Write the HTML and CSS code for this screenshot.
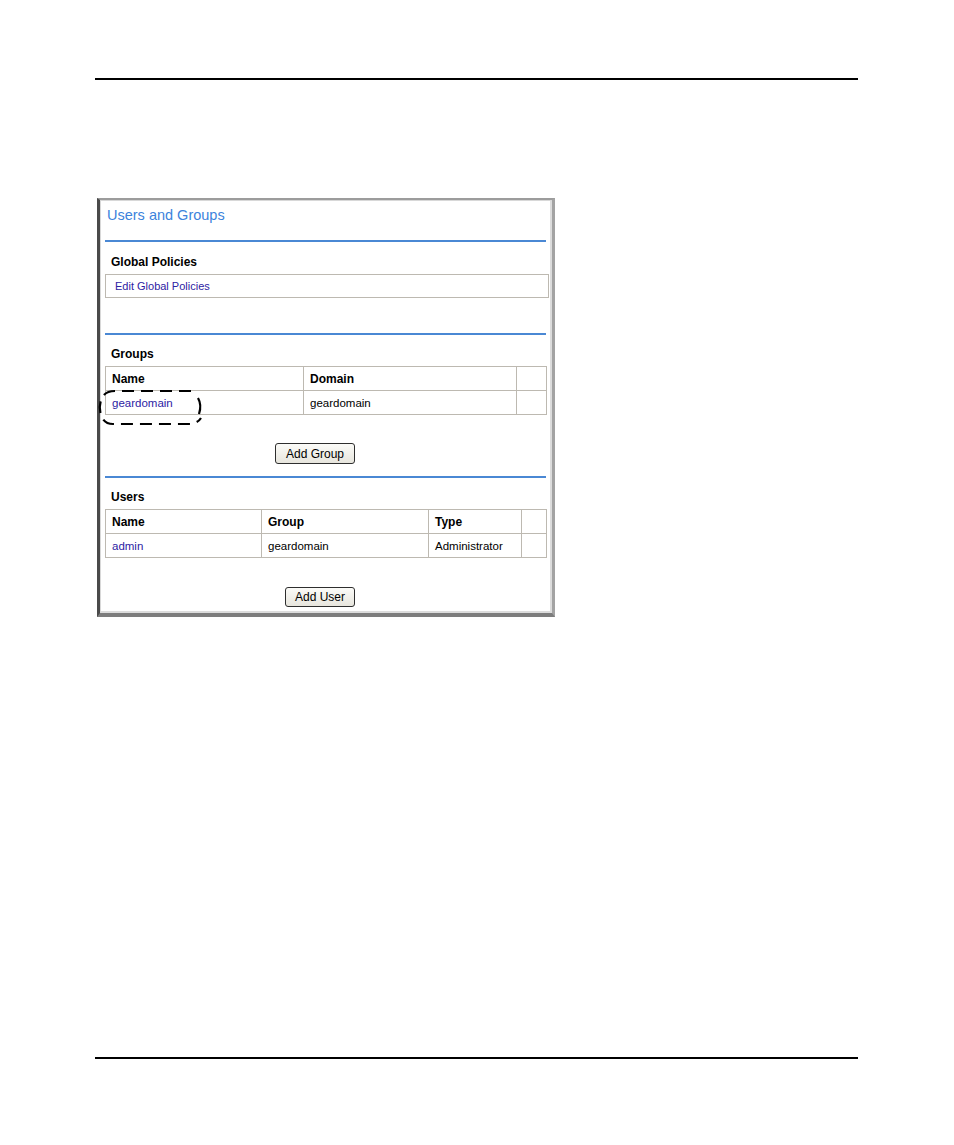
FILE: index.html
```html
<!DOCTYPE html>
<html lang="en">
  <head>
    <meta charset="UTF-8" />
    <title>Users and Groups</title>
    <link rel="stylesheet" href="styles.css">
  </head>
  <body>
    <div class="page">
      <div class="rule-top"></div>

      <div class="shot">
        <h1 class="title">Users and Groups</h1>
        <div class="blue-rule"></div>

        <h2 class="sub sub-global">Global Policies</h2>
        <div class="policy-box">
          <a href="#">Edit Global Policies</a>
        </div>

        <div class="blue-rule rule-groups"></div>
        <h2 class="sub">Groups</h2>
        <table class="grid">
          <colgroup>
            <col style="width:198px">
            <col style="width:213px">
            <col>
          </colgroup>
          <tr>
            <th>Name</th>
            <th>Domain</th>
            <th></th>
          </tr>
          <tr>
            <td><a href="#">geardomain</a></td>
            <td>geardomain</td>
            <td></td>
          </tr>
        </table>
        <div class="btn-row btn-row-group">
          <button class="btn">Add Group</button>
        </div>

        <div class="blue-rule rule-users"></div>
        <h2 class="sub">Users</h2>
        <table class="grid">
          <colgroup>
            <col style="width:156px">
            <col style="width:167px">
            <col style="width:93px">
            <col>
          </colgroup>
          <tr>
            <th>Name</th>
            <th>Group</th>
            <th>Type</th>
            <th></th>
          </tr>
          <tr>
            <td><a href="#">admin</a></td>
            <td>geardomain</td>
            <td>Administrator</td>
            <td></td>
          </tr>
        </table>
        <div class="btn-row btn-row-user">
          <button class="btn">Add User</button>
        </div>

        <!-- hand drawn callout round the group link -->
        <svg class="callout" width="112" height="42" viewBox="0 0 112 42">
          <path d="M94 3 L18 3 Q8 3 5 10 Q1 18 4 27 Q7 36 16 36 L93 36 Q101 35 104 30"
                fill="none" stroke="#000" stroke-width="2.2" stroke-dasharray="12 7" />
          <path d="M101 10 Q105 17 102 26" fill="none" stroke="#000" stroke-width="2.2" />
        </svg>
      </div>

      <div class="rule-bottom"></div>
    </div>
  </body>
</html>
```

FILE: styles.css
```css
* {
  margin: 0;
  padding: 0;
  box-sizing: border-box;
}

body {
  background-color: #fff;
  font-family: "Liberation Sans", Arial, sans-serif;
  color: #000;
}

.page {
  display: flex;
  flex-direction: column;
  height: 1145px;
  padding: 78px 96px 86px 95px;
}

.rule-top,
.rule-bottom {
  height: 2px;
  background-color: #000;
}

.rule-bottom {
  margin-top: auto;
}

.shot {
  position: relative;
  width: 458px;
  height: 419px;
  margin-top: 118px;
  margin-left: 2px;
  padding: 0 3px 0 5px;
  background-color: #fff;
  border-top: 2px solid #9c9c9c;
  border-left: 3px solid #4a4a4a;
  border-right: 3px solid #a3a3a3;
  border-bottom: 4px solid #7d7d7d;
  box-shadow: inset 1px 1px 0 #d8d8d8, inset -2px -2px 0 #dcdcdc;
}

.title {
  margin: 6px 0 0 2px;
  font-size: 14.5px;
  line-height: 18px;
  font-weight: normal;
  color: #3c83dc;
}

.blue-rule {
  width: 441px;
  height: 2px;
  margin-top: 16px;
  background-color: #4a88d4;
}

.rule-groups {
  margin-top: 35px;
}

.rule-users {
  margin-top: 12px;
}

.sub {
  margin: 12px 0 5px 6px;
  font-size: 12px;
  line-height: 14px;
  font-weight: bold;
}

.sub-global {
  margin-top: 13px;
}

.policy-box {
  width: 444px;
  height: 24px;
  border: 1px solid #bdb9b1;
  padding-left: 9px;
  font-size: 11px;
  line-height: 22px;
}

a {
  color: #2d22a3;
  text-decoration: none;
}

.grid {
  width: 442px;
  table-layout: fixed;
  border-collapse: collapse;
  font-size: 11.5px;
}

.grid th,
.grid td {
  height: 24px;
  padding: 0 6px;
  border: 1px solid #bdb9b1;
  text-align: left;
  white-space: nowrap;
}

.grid th {
  font-weight: bold;
  font-size: 12px;
}

.btn-row {
  display: flex;
}

.btn-row-group {
  margin-top: 28px;
  padding-left: 170px;
}

.btn-row-user {
  margin-top: 29px;
  padding-left: 180px;
}

.btn {
  height: 21px;
  padding: 0 11px;
  font-family: "Liberation Sans", Arial, sans-serif;
  font-size: 12px;
  color: #000;
  border: 1px solid #2e2e2e;
  border-radius: 3px;
  background: linear-gradient(#fbfbf8, #e7e5dd);
}

.btn-row-user .btn {
  width: 70px;
  height: 20px;
  padding: 0;
}

.btn-row-group .btn {
  width: 80px;
  padding: 0;
}

.callout {
  position: absolute;
  left: -3px;
  top: 188px;
}
```
